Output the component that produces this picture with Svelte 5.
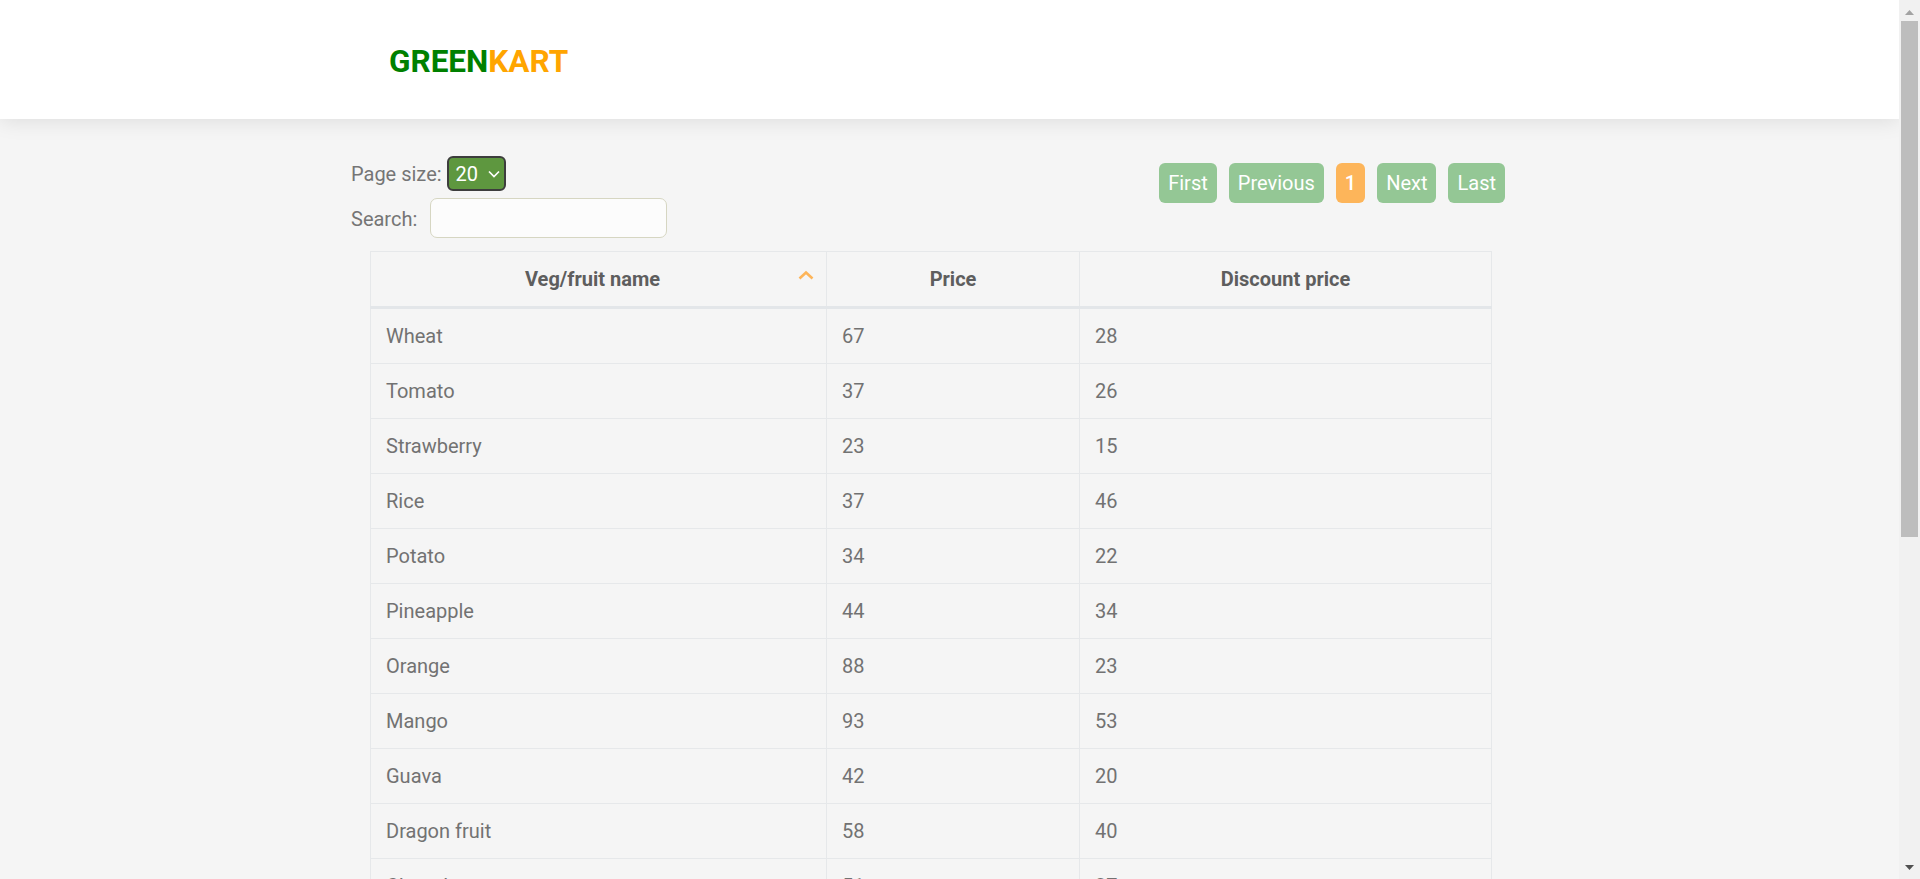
<script>
	const rows = [
		['Wheat', 67, 28],
		['Tomato', 37, 26],
		['Strawberry', 23, 15],
		['Rice', 37, 46],
		['Potato', 34, 22],
		['Pineapple', 44, 34],
		['Orange', 88, 23],
		['Mango', 93, 53],
		['Guava', 42, 20],
		['Dragon fruit', 58, 40],
		['Chocolate', 51, 37]
	]
	const pages = ['First', 'Previous', '1', 'Next', 'Last']
</script>

<div class="window">
	<div class="page">
		<header class="brand-bar">
			<div class="brand"><span class="green">GREEN</span><span class="orange">KART</span></div>
		</header>

		<main class="content">
			<div class="toolbar">
				<div class="filters">
					<div class="size-row">
						<label for="size">Page size:</label>
						<div class="select" id="size">
							<span>20</span>
							<svg width="12" height="8" viewBox="0 0 12 8"><path d="M1 1.5l5 5 5-5" fill="none" stroke="#fff" stroke-width="1.7"/></svg>
						</div>
					</div>
					<div class="search-row">
						<label for="search">Search:</label>
						<input id="search" type="text" />
					</div>
				</div>
				<nav class="pager">
					{#each pages as p}
						<span class="page-btn" class:active={p === '1'}>{p}</span>
					{/each}
				</nav>
			</div>

			<table>
				<thead>
					<tr>
						<th class="sorted">
							Veg/fruit name
							<svg class="sort" width="16" height="10" viewBox="0 0 16 10"><path d="M1.5 8.5l6.5-6 6.5 6" fill="none" stroke="#fdb55a" stroke-width="2.6"/></svg>
						</th>
						<th>Price</th>
						<th>Discount price</th>
					</tr>
				</thead>
				<tbody>
					{#each rows as r}
						<tr>
							<td>{r[0]}</td>
							<td>{r[1]}</td>
							<td>{r[2]}</td>
						</tr>
					{/each}
				</tbody>
			</table>
		</main>
	</div>

	<aside class="scrollbar">
		<svg class="arrow up" width="17" height="17" viewBox="0 0 17 17"><path d="M4 11l4.5-5 4.5 5z" fill="#a3a3a3"/></svg>
		<div class="track"><div class="thumb"></div></div>
		<svg class="arrow down" width="17" height="17" viewBox="0 0 17 17"><path d="M4 6l4.5 5 4.5-5z" fill="#505050"/></svg>
	</aside>
</div>

<style>
	:global(body) {
		margin: 0;
		overflow: hidden;
		font-family: Roboto, sans-serif;
		background: #f5f5f5;
	}
	.window {
		display: flex;
		height: 879px;
		overflow: hidden;
	}
	.page {
		flex: 1;
		min-width: 0;
		overflow: hidden;
	}
	.brand-bar {
		height: 119px;
		background: #fff;
		box-shadow: 0 2px 20px rgba(0, 0, 0, 0.1);
		padding-left: 389px;
		box-sizing: border-box;
		display: flex;
		align-items: center;
		position: relative;
	}
	.brand {
		font-size: 31.5px;
		font-weight: 700;
		line-height: 1;
		margin-top: 5px;
	}
	.green { color: #008000; }
	.orange { color: #ffa500; }

	.content {
		padding: 37px 0 0 351px;
		width: 1154px;
	}
	.toolbar {
		display: flex;
		justify-content: space-between;
		height: 95px;
	}
	.filters {
		font-size: 20px;
		color: #757575;
	}
	.size-row, .search-row {
		display: flex;
		align-items: center;
	}
	.size-row { gap: 5px; height: 35px; }
	.search-row { gap: 13px; margin-top: 7px; }
	.search-row label { padding-top: 2px; }
	.select {
		display: flex;
		align-items: center;
		justify-content: space-between;
		box-sizing: border-box;
		width: 59px;
		height: 35px;
		padding: 0 4px 0 7px;
		background: #5e973f;
		color: #fff;
		border: 2px solid #3d3d3d;
		border-radius: 6px;
		font-size: 20px;
	}
	input {
		box-sizing: border-box;
		width: 237px;
		height: 40px;
		background: #fcfcfc;
		border: 1px solid #d6d6c2;
		border-radius: 7px;
	}
	.pager {
		display: flex;
		gap: 12px;
		padding-top: 7px;
		height: 40px;
	}
	.page-btn {
		box-sizing: border-box;
		height: 40px;
		line-height: 40px;
		padding: 0 9px;
		background: #94c795;
		color: #fff;
		font-size: 20px;
		border-radius: 6px;
	}
	.page-btn.active {
		background: #fdb55a;
		font-weight: 500;
	}

	table {
		margin-left: 19px;
		width: 1122px;
		table-layout: fixed;
		border-collapse: collapse;
		color: #727272;
		font-size: 20px;
	}
	th:nth-child(1) { width: 443px; }
	th:nth-child(2) { width: 252px; }
	th, td {
		border: 1px solid #e6e8ea;
	}
	th {
		height: 54px;
		padding: 0;
		border-bottom: 3px solid #e3e6e9;
		font-size: 20px;
		font-weight: 700;
		color: #5e5e5e;
		position: relative;
	}
	th.sorted { padding-right: 12px; }
	.sort {
		position: absolute;
		right: 12px;
		top: 18px;
	}
	td {
		height: 54px;
		padding: 0 15px;
	}
	.scrollbar {
		width: 21px;
		flex: none;
		box-sizing: border-box;
		padding-left: 2px;
		padding-right: 2px;
		background: #f1f1f1;
		display: flex;
		flex-direction: column;
		align-items: center;
	}
	.arrow { flex: none; }
	.arrow.up { margin-top: 4px; }
	.arrow.down { margin-bottom: 3px; }
	.track {
		flex: 1;
		width: 17px;
	}
	.thumb {
		height: 516px;
		background: #bdbdbd;
	}
</style>
